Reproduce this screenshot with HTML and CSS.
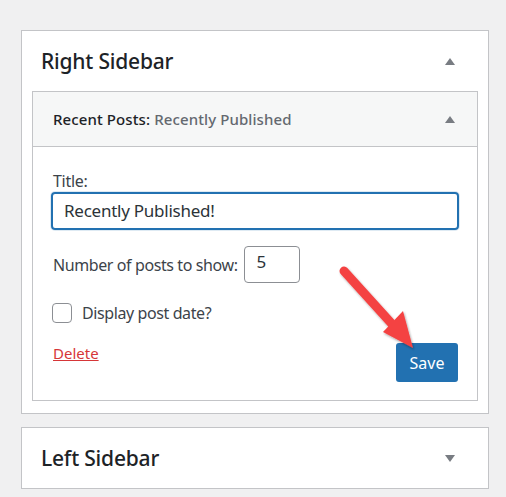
FILE: index.html
```html
<!DOCTYPE html>
<html>
<head>
<meta charset="utf-8">
<link rel="stylesheet" href="styles.css">
</head>
<body>
<div class="page">
  <div class="sidebar">
    <div class="sidebar-head">
      <h2 class="sidebar-name">Right Sidebar</h2>
      <span class="tri tri-up"></span>
    </div>
    <div class="widget">
      <div class="widget-top">
        <h3 class="widget-title">Recent Posts<span class="colon">:</span> <span class="in-title">Recently Published</span></h3>
        <span class="tri tri-up"></span>
      </div>
      <div class="widget-inside">
        <label class="field-label">Title:</label>
        <div class="title-input">Recently Published!</div>
        <div class="row-number">
          <span class="row-text">Number of posts to show:</span>
          <span class="num-input">5</span>
        </div>
        <div class="row-check">
          <span class="checkbox"></span>
          <span class="row-text">Display post date?</span>
        </div>
        <div class="actions">
          <a class="delete">Delete</a>
          <span class="save">Save</span>
        </div>
      </div>
    </div>
  </div>
  <div class="sidebar closed">
    <div class="sidebar-head">
      <h2 class="sidebar-name">Left Sidebar</h2>
      <span class="tri tri-down"></span>
    </div>
  </div>
  <svg class="arrow" width="506" height="497" viewBox="0 0 506 497">
    <defs>
      <filter id="sh" x="-20%" y="-20%" width="140%" height="140%">
        <feDropShadow dx="1" dy="1.5" stdDeviation="1.2" flood-color="#000" flood-opacity="0.35"/>
      </filter>
    </defs>
    <g filter="url(#sh)" fill="#f44343" stroke="none">
      <line x1="344" y1="271" x2="392" y2="324" stroke="#f44343" stroke-width="9" stroke-linecap="round"/>
      <polygon points="383,332 403,311 413,348"/>
    </g>
  </svg>
</div>
</body>
</html>
```

FILE: styles.css
```css
* { box-sizing: border-box; }
html, body { margin: 0; padding: 0; }
body {
  background: #f0f0f1;
  font-family: "Noto Sans", "Open Sans", sans-serif;
  color: #3c434a;
  width: 506px;
  height: 497px;
  overflow: hidden;
}
.page {
  position: relative;
  padding: 30px 0 0 21px;
  width: 506px;
  height: 497px;
}
.sidebar {
  width: 468px;
  background: #fff;
  border: 1px solid #c3c4c7;
  padding-bottom: 12px;
}
.sidebar.closed {
  margin-top: 13px;
  padding-bottom: 0;
}
.sidebar-head {
  height: 60px;
  display: flex;
  align-items: center;
  justify-content: space-between;
  padding: 0 33px 0 19px;
}
.sidebar-name {
  margin: 0;
  font-size: 21px;
  font-weight: 500;
  color: #1d2327;
  letter-spacing: -0.2px;
}
.tri {
  width: 0;
  height: 0;
  border-left: 5px solid transparent;
  border-right: 5px solid transparent;
}
.tri-up { border-bottom: 7px solid #787c82; }
.tri-down { border-top: 7px solid #787c82; }
.widget {
  margin: 0 10px;
  border: 1px solid #c3c4c7;
}
.widget-top {
  height: 55px;
  background: #f6f7f7;
  border-bottom: 1px solid #c3c4c7;
  display: flex;
  align-items: center;
  justify-content: space-between;
  padding: 0 22px 0 20px;
}
.widget-title {
  margin: 0;
  font-size: 15px;
  font-weight: 500;
  color: #1d2327;
  letter-spacing: 0.1px;
}
.in-title { color: #646970; }
.widget-inside {
  padding: 24px 18px 18px 18px;
}
.field-label {
  display: block;
  font-size: 16px;
  line-height: 20px;
  padding-left: 2px;
  margin-bottom: 0;
  height: 21px;
  letter-spacing: -0.3px;
}
.title-input {
  height: 38px;
  border: 2px solid #2271b1;
  border-radius: 4px;
  font-size: 17px;
  color: #2c3338;
  padding: 0 11px;
  line-height: 34px;
  letter-spacing: -0.25px;
  box-shadow: 0 0 0 1px rgba(34,113,177,0.15);
}
.row-number {
  display: flex;
  align-items: center;
  margin-top: 16px;
  padding-left: 2px;
}
.row-text {
  font-size: 16px;
  letter-spacing: -0.4px;
}
.num-input {
  margin-left: 6px;
  width: 56px;
  height: 37px;
  border: 1px solid #8c8f94;
  border-radius: 4px;
  font-size: 17px;
  line-height: 30px;
  padding-left: 12px;
  color: #2c3338;
}
.row-check {
  display: flex;
  align-items: center;
  margin-top: 19px;
  padding-left: 1px;
}
.checkbox {
  width: 20px;
  height: 20px;
  border: 1px solid #8c8f94;
  border-radius: 4px;
  margin-right: 10px;
  background: #fff;
}
.actions {
  display: flex;
  justify-content: space-between;
  align-items: flex-start;
  margin-top: 17px;
  padding-left: 2px;
}
.delete {
  color: #d63638;
  text-decoration: underline;
  font-size: 15px;
  line-height: 20px;
  margin-top: 2px;
}
.save {
  margin-top: 2px;
  margin-right: 1px;
  width: 62px;
  height: 39px;
  background: #2271b1;
  color: #fff;
  border-radius: 3px;
  font-size: 16px;
  display: flex;
  align-items: center;
  justify-content: center;
}
.arrow {
  position: absolute;
  left: 0;
  top: 0;
  pointer-events: none;
}
```
